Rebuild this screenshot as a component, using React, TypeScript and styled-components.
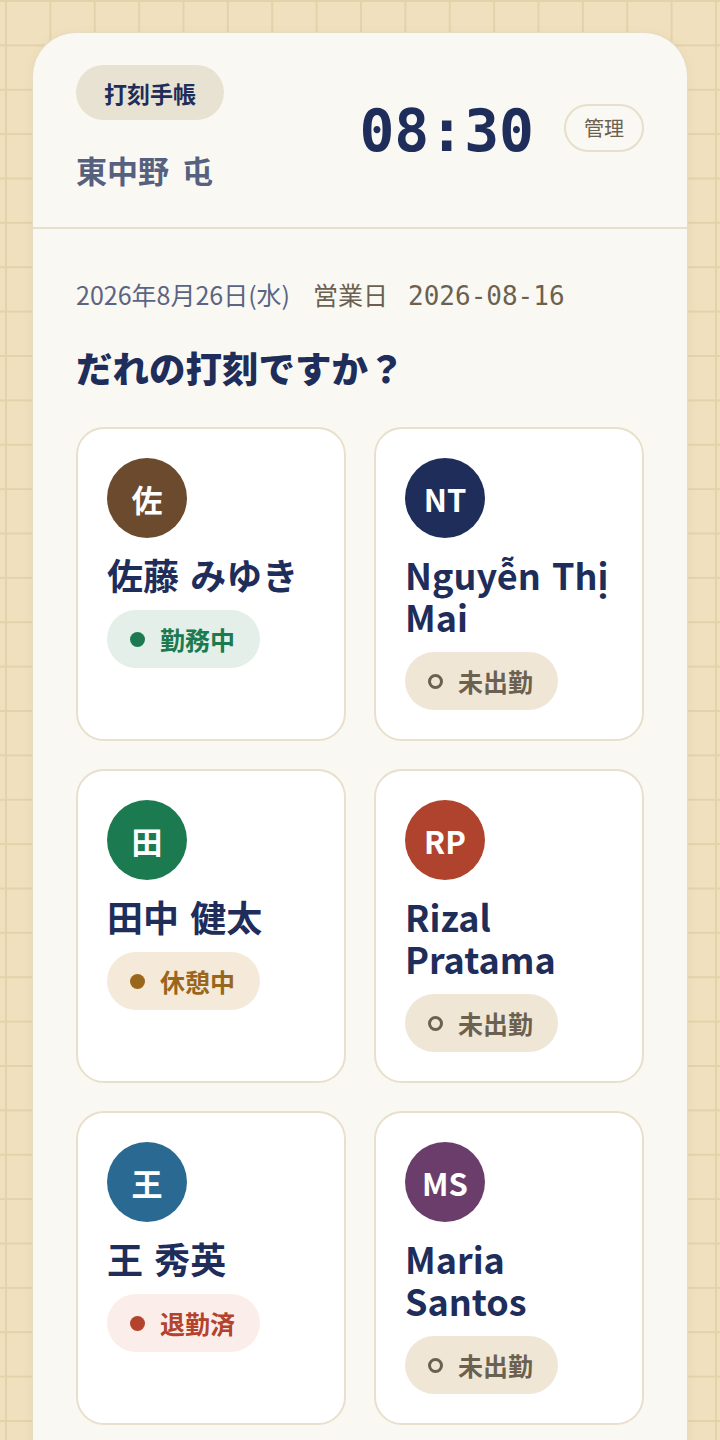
import React from "react";
import styled, { createGlobalStyle, css } from "styled-components";

const GlobalStyle = createGlobalStyle`
  html, body {
    margin: 0;
    padding: 0;
  }
  body {
    min-height: 1440px;
    background-color: #f0e0bd;
    background-image:
      linear-gradient(to right, #e4d2ab 2px, transparent 2px),
      linear-gradient(to bottom, #e4d2ab 2px, transparent 2px);
    background-size: 44.375px 44.375px;
    background-position: 5px 0;
    font-family: "Noto Sans CJK JP", "Noto Sans", sans-serif;
    color: #1e2d5a;
  }
  * { box-sizing: border-box; }
`;

const Page = styled.div`
  padding: 32px 32px 0;
`;

const Panel = styled.main`
  background: #faf8f2;
  border: 1px solid #e6dcc4;
  border-bottom: none;
  border-radius: 44px 44px 0 0;
  box-shadow: 0 2px 10px rgba(150, 120, 60, 0.08);
  min-height: 1420px;
`;

const Header = styled.header`
  display: flex;
  align-items: center;
  justify-content: space-between;
  padding: 32px 43px 37px;
  border-bottom: 2px solid #e6dfcb;
`;

const Brand = styled.div`
  display: flex;
  flex-direction: column;
  align-items: flex-start;
  gap: 30px;
`;

const AppTag = styled.div`
  display: inline-flex;
  align-items: center;
  justify-content: center;
  height: 55px;
  padding: 0 28px;
  border-radius: 28px;
  background: #e8e2d2;
  color: #1e2d5a;
  font-size: 23px;
  font-weight: 700;
`;

const StoreName = styled.div`
  font-size: 31px;
  line-height: 40px;
  font-weight: 700;
  color: #56617f;
  word-spacing: 6px;
`;

const HeaderRight = styled.div`
  display: flex;
  align-items: center;
  gap: 30px;
`;

const Clock = styled.div`
  font-family: "DejaVu Sans Mono", "Liberation Mono", monospace;
  font-size: 58px;
  font-weight: 700;
  line-height: 1;
  color: #1e2d5a;
  margin-top: 6px;
`;

const AdminButton = styled.button`
  height: 48px;
  padding: 0 18px;
  border-radius: 24px;
  border: 2px solid #e6dfcb;
  background: transparent;
  font-family: "Noto Sans CJK JP", sans-serif;
  font-size: 20px;
  color: #6b6150;
  cursor: pointer;
`;

const Body = styled.section`
  padding: 47px 43px 44px;
`;

const DateLine = styled.div`
  display: flex;
  align-items: baseline;
  font-size: 25px;
  line-height: 36px;
`;

const Today = styled.span`
  color: #5a6585;
  font-weight: 400;
`;

const BizLabel = styled.span`
  color: #6b6150;
  margin-left: 23px;
  font-size: 25px;
`;

const BizDate = styled.span`
  font-family: "DejaVu Sans Mono", "Liberation Mono", monospace;
  color: #6b6150;
  font-size: 26px;
  margin-left: 20px;
`;

const Question = styled.h1`
  margin: 30px 0 0;
  font-size: 36.5px;
  line-height: 48px;
  font-weight: 900;
  color: #1e2d5a;
`;

const Grid = styled.div`
  margin-top: 35px;
  display: grid;
  grid-template-columns: 1fr 1fr;
  column-gap: 28px;
  row-gap: 28px;
`;

const Card = styled.button`
  display: flex;
  flex-direction: column;
  align-items: flex-start;
  text-align: left;
  padding: 29px;
  background: #ffffff;
  border: 2px solid #e8e0cc;
  border-radius: 28px;
  font-family: inherit;
  cursor: pointer;
`;

const Avatar = styled.div<{ $bg: string }>`
  width: 80px;
  height: 80px;
  border-radius: 50%;
  background: ${(p) => p.$bg};
  color: #ffffff;
  display: flex;
  align-items: center;
  justify-content: center;
  font-size: 31px;
  font-weight: 700;
`;

const Name = styled.div`
  margin-top: 15px;
  font-size: 36px;
  line-height: 42px;
  font-weight: 700;
  color: #1e2d5a;
  word-spacing: 3px;
`;

type Status = "working" | "break" | "done" | "off";

const statusStyles: Record<Status, { bg: string; fg: string }> = {
  working: { bg: "#e3efe8", fg: "#1c7a50" },
  break: { bg: "#f5ead9", fg: "#9a661c" },
  done: { bg: "#fbeeea", fg: "#b4432e" },
  off: { bg: "#efe6d6", fg: "#6b6150" },
};

const StatusPill = styled.div<{ $status: Status }>`
  margin-top: 15px;
  display: inline-flex;
  align-items: center;
  gap: 15px;
  height: 58px;
  padding: 0 25px 0 23px;
  border-radius: 29px;
  background: ${(p) => statusStyles[p.$status].bg};
  color: ${(p) => statusStyles[p.$status].fg};
  font-size: 25px;
  font-weight: 700;
`;

const Dot = styled.span<{ $status: Status }>`
  width: 15px;
  height: 15px;
  border-radius: 50%;
  flex: none;
  ${(p) =>
    p.$status === "off"
      ? css`
          border: 3.5px solid ${statusStyles[p.$status].fg};
        `
      : css`
          background: ${statusStyles[p.$status].fg};
        `}
`;

const statusLabel: Record<Status, string> = {
  working: "勤務中",
  break: "休憩中",
  done: "退勤済",
  off: "未出勤",
};

type Staff = { initials: string; name: string; color: string; status: Status };

const staff: Staff[] = [
  { initials: "佐", name: "佐藤 みゆき", color: "#6b4a2e", status: "working" },
  { initials: "NT", name: "Nguyễn Thị Mai", color: "#1e2d5a", status: "off" },
  { initials: "田", name: "田中 健太", color: "#1c7a50", status: "break" },
  { initials: "RP", name: "Rizal Pratama", color: "#b0432e", status: "off" },
  { initials: "王", name: "王 秀英", color: "#2a6a92", status: "done" },
  { initials: "MS", name: "Maria Santos", color: "#6b3d6b", status: "off" },
];

export default function App() {
  return (
    <>
      <GlobalStyle />
      <Page>
        <Panel>
          <Header>
            <Brand>
              <AppTag>打刻手帳</AppTag>
              <StoreName>東中野 屯</StoreName>
            </Brand>
            <HeaderRight>
              <Clock>08:30</Clock>
              <AdminButton>管理</AdminButton>
            </HeaderRight>
          </Header>
          <Body>
            <DateLine>
              <Today>2026年8月26日(水)</Today>
              <BizLabel>営業日</BizLabel>
              <BizDate>2026-08-16</BizDate>
            </DateLine>
            <Question>だれの打刻ですか？</Question>
            <Grid>
              {staff.map((s) => (
                <Card key={s.name}>
                  <Avatar $bg={s.color}>{s.initials}</Avatar>
                  <Name>{s.name}</Name>
                  <StatusPill $status={s.status}>
                    <Dot $status={s.status} />
                    {statusLabel[s.status]}
                  </StatusPill>
                </Card>
              ))}
            </Grid>
          </Body>
        </Panel>
      </Page>
    </>
  );
}
